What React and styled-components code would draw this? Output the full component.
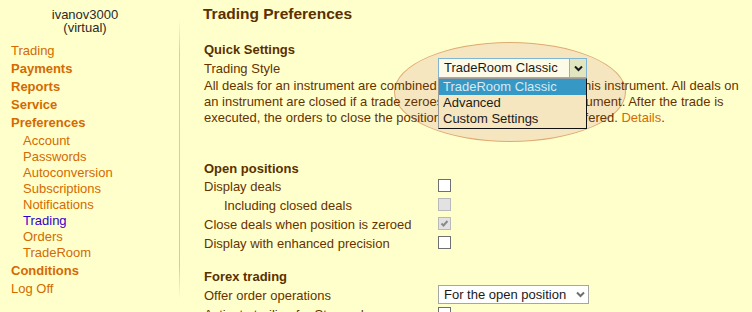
import React from "react";
import styled, { createGlobalStyle } from "styled-components";

const GlobalStyle = createGlobalStyle`
  html, body {
    margin: 0;
    padding: 0;
    background: #ffffcc;
  }
  body {
    font-family: "Liberation Sans", Arial, sans-serif;
    font-size: 13px;
    color: #663300;
    overflow: hidden;
  }
`;

const menu = [
  { label: "Trading" },
  { label: "Payments", bold: true },
  { label: "Reports", bold: true },
  { label: "Service", bold: true },
  {
    label: "Preferences",
    bold: true,
    children: [
      { label: "Account" },
      { label: "Passwords" },
      { label: "Autoconversion" },
      { label: "Subscriptions" },
      { label: "Notifications" },
      { label: "Trading", active: true },
      { label: "Orders" },
      { label: "TradeRoom" },
    ],
  },
  { label: "Conditions", bold: true },
  { label: "Log Off" },
];

const Chevron = ({ color }) => (
  <svg width="9" height="7" viewBox="0 0 9 7">
    <path d="M1 1.5 L4.5 5 L8 1.5" fill="none" stroke={color} strokeWidth="2" />
  </svg>
);

const App = () => {
  return (
    <Page>
      <GlobalStyle />
      <Sidebar>
        <User>
          ivanov3000
          <br />
          (virtual)
        </User>
        <Menu>
          {menu.map((m, i) => (
            <React.Fragment key={`m${i}`}>
              <MenuItem $bold={m.bold}>{m.label}</MenuItem>
              {m.children && (
                <SubMenu>
                  {m.children.map((c, j) => (
                    <SubItem key={`s${j}`} $active={c.active}>
                      {c.label}
                    </SubItem>
                  ))}
                </SubMenu>
              )}
            </React.Fragment>
          ))}
        </Menu>
      </Sidebar>
      <Divider />

      <Main>
        <Highlight />
        <Content>
          <Title>Trading Preferences</Title>

          <SectionTitle>Quick Settings</SectionTitle>
          <Row>
            <span>Trading Style</span>
            <SelectWrap>
              <FocusSelect>
                <SelectText>TradeRoom Classic</SelectText>
                <ArrowBox>
                  <Chevron color="#1a1a1a" />
                </ArrowBox>
              </FocusSelect>
              <DropList>
                <DropItem $selected>TradeRoom Classic</DropItem>
                <DropItem>Advanced</DropItem>
                <DropItem>Custom Settings</DropItem>
              </DropList>
            </SelectWrap>
          </Row>
          <Description>
            All deals for an instrument are combined into a single position for this instrument. All deals on
            <br />
            an instrument are closed if a trade zeroes the position for that instrument. After the trade is
            <br />
            executed, the orders to close the position for this instrument are offered. <Link>Details</Link>.
          </Description>

          <SectionTitle $gap={34}>Open positions</SectionTitle>
          <CheckRow>
            <span>Display deals</span>
            <Box />
          </CheckRow>
          <CheckRow>
            <Indented>Including closed deals</Indented>
            <Box $disabled />
          </CheckRow>
          <CheckRow>
            <span>Close deals when position is zeroed</span>
            <Box $disabled>
              <svg width="11" height="11" viewBox="0 0 11 11">
                <path d="M2.5 5.5 L4.5 7.5 L8.5 3" fill="none" stroke="#8a8a8a" strokeWidth="2" />
              </svg>
            </Box>
          </CheckRow>
          <CheckRow>
            <span>Display with enhanced precision</span>
            <Box />
          </CheckRow>

          <SectionTitle $gap={15}>Forex trading</SectionTitle>
          <Row>
            <span>Offer order operations</span>
            <PlainSelect>
              <SelectText>For the open position</SelectText>
              <PlainArrow>
                <Chevron color="#6f6f6f" />
              </PlainArrow>
            </PlainSelect>
          </Row>
          <CheckRow>
            <span>Activate trailing for Stop orders</span>
            <Box />
          </CheckRow>
        </Content>
      </Main>
    </Page>
  );
};

export default App;

const Page = styled.div`
  display: flex;
  align-items: flex-start;
  width: 752px;
  height: 312px;
  overflow: hidden;
`;

const Sidebar = styled.nav`
  width: 179px;
  flex-shrink: 0;
  padding-top: 8px;
`;

const User = styled.div`
  width: 170px;
  text-align: center;
  line-height: 13px;
  color: #2a2a2a;
`;

const Menu = styled.div`
  margin-top: 8px;
  display: flex;
  flex-direction: column;
`;

const MenuItem = styled.a`
  display: block;
  padding-left: 11px;
  line-height: 18px;
  font-weight: ${(p) => (p.$bold ? "bold" : "normal")};
  color: #d46a00;
  cursor: pointer;
`;

const SubMenu = styled.div`
  display: flex;
  flex-direction: column;
  padding: 1px 0;
`;

const SubItem = styled.a`
  display: block;
  padding-left: 23px;
  line-height: 16px;
  color: ${(p) => (p.$active ? "#3300cc" : "#d46a00")};
  cursor: pointer;
`;

const Divider = styled.div`
  width: 1px;
  height: 280px;
  margin-top: 19px;
  flex-shrink: 0;
  background: linear-gradient(
    to bottom,
    rgba(226, 200, 140, 0) 0%,
    #e2cc96 12%,
    #e2c890 88%,
    rgba(226, 200, 140, 0) 100%
  );
`;

const Main = styled.main`
  position: relative;
  flex: 1;
  padding-left: 24px;
`;

const Highlight = styled.div`
  position: absolute;
  left: 214px;
  top: 42px;
  width: 230px;
  height: 98px;
  border-radius: 50%;
  background: #f6e6bf;
  border: 1.5px solid #deaa72;
`;

const Content = styled.div`
  position: relative;
  z-index: 1;
`;

const Title = styled.h1`
  margin: 5px 0 0 -1px;
  font-size: 15.5px;
  line-height: 18px;
  font-weight: bold;
  color: #5a3000;
`;

const SectionTitle = styled.h2`
  margin: ${(p) => p.$gap ?? 18}px 0 0 0;
  font-size: 13px;
  line-height: 17px;
  font-weight: bold;
  color: #5a3000;
`;

const Row = styled.div`
  display: grid;
  grid-template-columns: 234px auto;
  align-items: center;
  height: 20px;
`;

const CheckRow = styled.div`
  display: grid;
  grid-template-columns: 234px auto;
  align-items: center;
  height: 19px;
`;

const Indented = styled.span`
  padding-left: 20px;
`;

const SelectWrap = styled.div`
  position: relative;
  width: 149px;
`;

const FocusSelect = styled.div`
  display: flex;
  height: 20px;
  box-sizing: border-box;
  border: 1px solid #7fb6d4;
  background: #fdfbe8;
  color: #1a1a1a;
`;

const SelectText = styled.span`
  flex: 1;
  padding-left: 5px;
  line-height: 18px;
  white-space: nowrap;
  color: #1a1a1a;
`;

const ArrowBox = styled.span`
  width: 16px;
  display: flex;
  align-items: center;
  justify-content: center;
  border-left: 1px solid #7fb6d4;
  background: #e2e6c0;
`;

const DropList = styled.div`
  position: absolute;
  top: 20px;
  left: 0;
  width: 149px;
  box-sizing: border-box;
  border: 1px solid;
  border-color: #9a9a9a #111 #111 #9a9a9a;
  background: #f6e6bf;
  padding-bottom: 1px;
`;

const DropItem = styled.div`
  line-height: 16px;
  padding-left: 4px;
  white-space: nowrap;
  background: ${(p) => (p.$selected ? "#3598c5" : "transparent")};
  color: ${(p) => (p.$selected ? "#d8eaf2" : "#1a1a1a")};
`;

const Description = styled.p`
  margin: 0;
  line-height: 16px;
  white-space: nowrap;
`;

const Link = styled.a`
  color: #d46a00;
  cursor: pointer;
`;

const Box = styled.span`
  width: 13px;
  height: 13px;
  box-sizing: border-box;
  display: flex;
  align-items: center;
  justify-content: center;
  border: 1px solid ${(p) => (p.$disabled ? "#b9b9b9" : "#707070")};
  background: ${(p) => (p.$disabled ? "#e2e2e2" : "#ffffff")};
  margin-top: -2px;
`;

const PlainSelect = styled.div`
  display: flex;
  width: 151px;
  height: 19px;
  box-sizing: border-box;
  border: 1px solid #a6a6a6;
  background: #ffffff;
  align-self: start;
  & > span:first-child {
    line-height: 17px;
  }
`;

const PlainArrow = styled.span`
  width: 16px;
  display: flex;
  align-items: center;
  justify-content: center;
`;
